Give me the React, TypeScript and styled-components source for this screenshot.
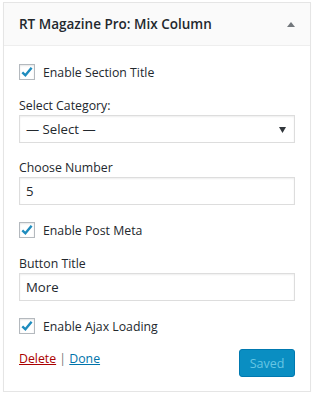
import { FC } from "react";
import styled, { createGlobalStyle } from "styled-components";

const GlobalStyle = createGlobalStyle`
  html, body {
    margin: 0;
    padding: 0;
    background: #fff;
  }
  body {
    font-family: "Open Sans", "Noto Sans", sans-serif;
    font-size: 12.3px;
    color: #23282d;
  }
`;

const Widget = styled.div`
  margin: 2px 1px 0 3px;
  width: 306px;
  border: 1px solid #e5e5e5;
  background: #fff;
  box-shadow: 0 1px 1px rgba(0, 0, 0, 0.04);
`;

const Header = styled.div`
  height: 42px;
  display: flex;
  align-items: center;
  justify-content: space-between;
  padding: 0 15px;
  background: #fafafa;
  border-bottom: 1px solid #eee;

  > h3 {
    margin: 0;
    font-size: 13.5px;
    font-weight: 600;
    color: #23282d;
  }
`;

const Body = styled.div`
  padding: 17px 15px 14px;
`;

const CheckRow = styled.label<{ $gap?: number }>`
  display: flex;
  align-items: center;
  gap: 8px;
  height: 18px;
  margin-bottom: ${(p) => p.$gap ?? 16}px;
`;

const Box = styled.span`
  width: 16px;
  height: 16px;
  box-sizing: border-box;
  border: 1px solid #b4b9be;
  box-shadow: inset 0 1px 2px rgba(0, 0, 0, 0.1);
  display: flex;
  align-items: center;
  justify-content: center;
`;

const Field = styled.div`
  margin-bottom: 16px;

  > .label {
    display: block;
    line-height: 18px;
  }
`;

const TextInput = styled.div`
  box-sizing: border-box;
  height: 28px;
  border: 1px solid #ddd;
  box-shadow: inset 0 1px 2px rgba(0, 0, 0, 0.07);
  padding: 0 6px;
  display: flex;
  align-items: center;
  font-size: 13.2px;
  position: relative;
`;

const Arrow = styled.svg`
  position: absolute;
  right: 8px;
  top: 11px;
`;

const Footer = styled.div`
  display: flex;
  justify-content: space-between;
  align-items: flex-start;
  margin-top: 14px;
`;

const Links = styled.div`
  padding-top: 1px;
  color: #72777c;

  > a {
    text-decoration: underline;
  }
  > .delete {
    color: #a00;
  }
  > .done {
    color: #0073aa;
  }
`;

const SaveButton = styled.button`
  width: 56px;
  height: 28px;
  border: 1px solid #0079b0;
  border-radius: 3px;
  background: #0a8ec2;
  color: #66c6e4;
  font-family: inherit;
  font-size: 12.5px;
  padding: 0;
`;

const Check: FC = () => (
  <Box>
    <svg width="14" height="14" viewBox="0 0 14 14">
      <path d="M2.3 7.3 L5.4 10.3 L11.6 2.7" fill="none" stroke="#1e8cbe" strokeWidth="2.4" />
    </svg>
  </Box>
);

export default function App() {
  return (
    <>
      <GlobalStyle />
      <Widget>
        <Header>
          <h3>RT Magazine Pro: Mix Column</h3>
          <svg width="8" height="5" viewBox="0 0 8 5">
            <path d="M0 5 L4 0 L8 5 Z" fill="#72777c" />
          </svg>
        </Header>
        <Body>
          <CheckRow>
            <Check />
            <span>Enable Section Title</span>
          </CheckRow>
          <Field>
            <span className="label">Select Category:</span>
            <TextInput>
              — Select —
              <Arrow width="7" height="6" viewBox="0 0 7 6">
                <path d="M0 0 L7 0 L3.5 6 Z" fill="#32373c" />
              </Arrow>
            </TextInput>
          </Field>
          <Field>
            <span className="label">Choose Number</span>
            <TextInput>5</TextInput>
          </Field>
          <CheckRow>
            <Check />
            <span>Enable Post Meta</span>
          </CheckRow>
          <Field>
            <span className="label">Button Title</span>
            <TextInput>More</TextInput>
          </Field>
          <CheckRow $gap={0}>
            <Check />
            <span>Enable Ajax Loading</span>
          </CheckRow>
          <Footer>
            <Links>
              <a className="delete">Delete</a> | <a className="done">Done</a>
            </Links>
            <SaveButton disabled>Saved</SaveButton>
          </Footer>
        </Body>
      </Widget>
    </>
  );
}
